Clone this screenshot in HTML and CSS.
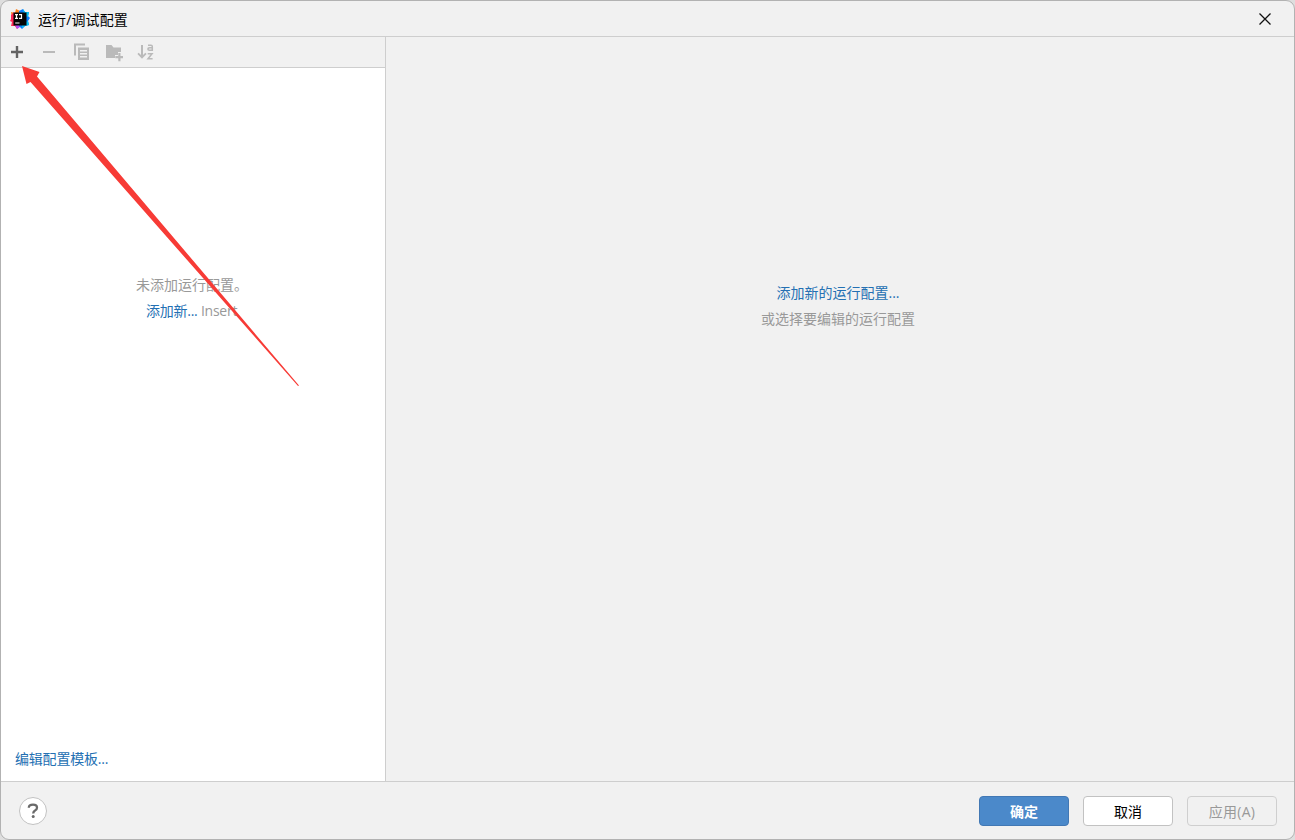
FILE: index.html
```html
<!DOCTYPE html>
<html lang="zh-CN">
<head>
<meta charset="utf-8">
<title>运行/调试配置</title>
<link rel="stylesheet" href="styles.css">
</head>
<body>
<div class="window">
  <header class="titlebar">
    <svg class="logo" width="20" height="20" viewBox="0 0 20 20">
      <path fill="#fc801d" d="M1 3 L5 4 L6 0 L10 2 L10 8 L2 10 Z"/>
      <path fill="#fe2857" d="M1 6 L4 3 L6 10 L10 17 L7 20 L5 17 L1 17 L2 13 L0 12 L1 10 Z"/>
      <path fill="#b74af7" d="M5 16 L12 15 L10 18 L7 20 Z"/>
      <path fill="#087cfa" d="M9 2 L13 0 L15 3 L19 3 L18 7 L20 9 L18 12 L19 16 L15 17 L12 20 L9 17 Z"/>
      <path fill="#07c3f2" d="M13 0 L15 3 L19 3 L18 8 L14 6 Z M18 12 L19 16 L15 17 L12 19 L12 15 Z"/>
      <rect x="3.5" y="3.5" width="13" height="13" fill="#050505"/>
      <path fill="none" stroke="#fff" stroke-width="1.2" d="M5 5.6 H8 M6.5 5.6 V9.4 M5 9.4 H8 M9 5.6 H11.5 V9.4 H9 M5.2 14 H9.5"/>
    </svg>
    <h1 class="title">运行/调试配置</h1>
    <svg class="close" width="12" height="12" viewBox="0 0 12 12"><path d="M0.5 0.5 L11.5 11.5 M11.5 0.5 L0.5 11.5"/></svg>
  </header>
  <main class="content">
    <section class="sidebar">
      <div class="toolbar">
        <svg class="tool tool-active" viewBox="0 0 20 20"><path d="M8.8 4h2.4v4.8H16v2.4h-4.8V16H8.8v-4.8H4V8.800h4.800z"/></svg>
        <svg class="tool" viewBox="0 0 20 20"><path d="M4 9h12v2H4z"/></svg>
        <svg class="tool" viewBox="0 0 20 20"><path fill-rule="evenodd" d="M3 1.500h11v2H5v10H3z M7 5.500h11V18H7z M9 8v1.600h7V8z M9 11v1.600h7V11z M9 14v1.500h7V14z"/></svg>
        <svg class="tool" viewBox="0 0 20 20"><path d="M3 3h5.500l2 2.500H18V10h-3v3h-3v3H3z M15.300 11h2.200v3H20v2.200h-2.500v3h-2.200v-3h-3V14h3z"/></svg>
        <svg class="tool" viewBox="0 0 20 20"><path d="M6 3h2v10l2.300-2.300 1.300 1.300L7 16.800 2.400 12l1.300-1.300L6 13z"/><path class="letters" d="M13 3.200h3q1.300 0 1.300 1.300V8.200h-2.800q-1.600 0-1.600-1.200t1.600-1.200h2.800 M12.700 11.800h4.300L13 16.700h4.600"/></svg>
      </div>
      <div class="empty-list">
        <div class="line">未添加运行配置。</div>
        <div class="line shortcut"><a class="link">添加新...</a> Insert</div>
      </div>
      <a class="link template-link">编辑配置模板...</a>
    </section>
    <section class="details">
      <div class="line"><a class="link">添加新的运行配置...</a></div>
      <div class="line">或选择要编辑的运行配置</div>
    </section>
  </main>
  <footer class="footer">
    <button class="help" aria-label="帮助"><svg width="14" height="18" viewBox="0 0 14 18"><path d="M2.8 5.8 Q2.9 2.7 7 2.7 Q11 2.7 11 5.7 Q11 7.3 9 8.6 Q7.2 9.7 7.2 11.6"/><circle cx="7.2" cy="14.6" r="1.5"/></svg></button>
    <div class="actions">
      <button class="button primary">确定</button>
      <button class="button">取消</button>
      <button class="button disabled" disabled>应用(A)</button>
    </div>
  </footer>
  <svg class="arrow" width="1295" height="840" viewBox="0 0 1295 840"><path d="M22 66 L39.5 72 L37 76.5 L299 385.5 L298 386 L30.5 82 L26.5 84 Z"/></svg>
</div>
</body>
</html>
```
FILE: styles.css
```css
* { box-sizing: border-box; }
body {
  margin: 0;
  background: #dedede;
  font: 14px/20px "Open Sans", "Noto Sans CJK SC", sans-serif;
}
.window {
  position: relative;
  display: flex;
  flex-direction: column;
  width: 1295px;
  height: 840px;
  overflow: hidden;
  border: 1px solid #b2b2b2;
  border-radius: 9px;
  background: #f1f1f1;
}
.titlebar {
  display: flex;
  align-items: center;
  height: 36px;
  padding: 0 23px 0 9px;
  border-bottom: 1px solid #cecece;
}
.logo { margin-right: 8px; }
.title {
  margin: 2px 0 0;
  color: #000;
  font-size: 14px;
  font-weight: 400;
  letter-spacing: 0.1px;
}
.close {
  margin-left: auto;
  fill: none;
  stroke: #111;
  stroke-width: 1.3;
}
.content {
  display: flex;
  height: 745px;
  border-bottom: 1px solid #cecece;
}
.sidebar {
  display: flex;
  flex-direction: column;
  width: 385px;
  border-right: 1px solid #cecece;
  background: #fff;
}
.toolbar {
  display: flex;
  align-items: center;
  gap: 12px;
  height: 31px;
  padding-left: 6px;
  border-bottom: 1px solid #cecece;
  background: #f1f1f1;
}
.tool {
  width: 20px;
  height: 20px;
  fill: #bababa;
}
.tool-active { fill: #636363; }
.letters {
  fill: none;
  stroke: #bababa;
  stroke-width: 1.5;
}
.empty-list {
  flex: 1;
  padding: 204px 0 0 135px;
  color: #999;
}
.shortcut {
  padding-left: 10px;
  letter-spacing: -0.25px;
}
.line {
  height: 26px;
  line-height: 26px;
  white-space: nowrap;
}
.link { color: #2470b3; }
.template-link {
  padding: 0 0 12px 14px;
  letter-spacing: -0.2px;
}
.details {
  flex: 1;
  padding: 243px 4px 0 0;
  color: #999;
  text-align: center;
}
.footer {
  display: flex;
  flex: 1;
  align-items: center;
  justify-content: space-between;
  padding: 0 17px 0 18px;
}
.help {
  display: flex;
  align-items: center;
  justify-content: center;
  width: 28px;
  height: 28px;
  padding: 0;
  border: 1px solid #c2c2c2;
  border-radius: 50%;
  background: #fff;
}
.help path {
  fill: none;
  stroke: #6a6a6a;
  stroke-width: 2.3;
}
.help circle { fill: #6a6a6a; }
.actions {
  display: flex;
  gap: 14px;
}
.button {
  width: 90px;
  height: 30px;
  padding: 2px 0 0;
  border: 1px solid #c2c2c2;
  border-radius: 4px;
  background: #fff;
  color: #000;
  font: inherit;
}
.primary {
  border-color: #4278b4;
  background: #4b89ca;
  color: #fff;
  font-weight: 600;
}
.disabled {
  border-color: #cfcfcf;
  background: #f1f1f1;
  color: #999;
  letter-spacing: 0.3px;
}
.arrow {
  position: absolute;
  top: -1px;
  left: -1px;
  fill: #f73b36;
  pointer-events: none;
}
```
